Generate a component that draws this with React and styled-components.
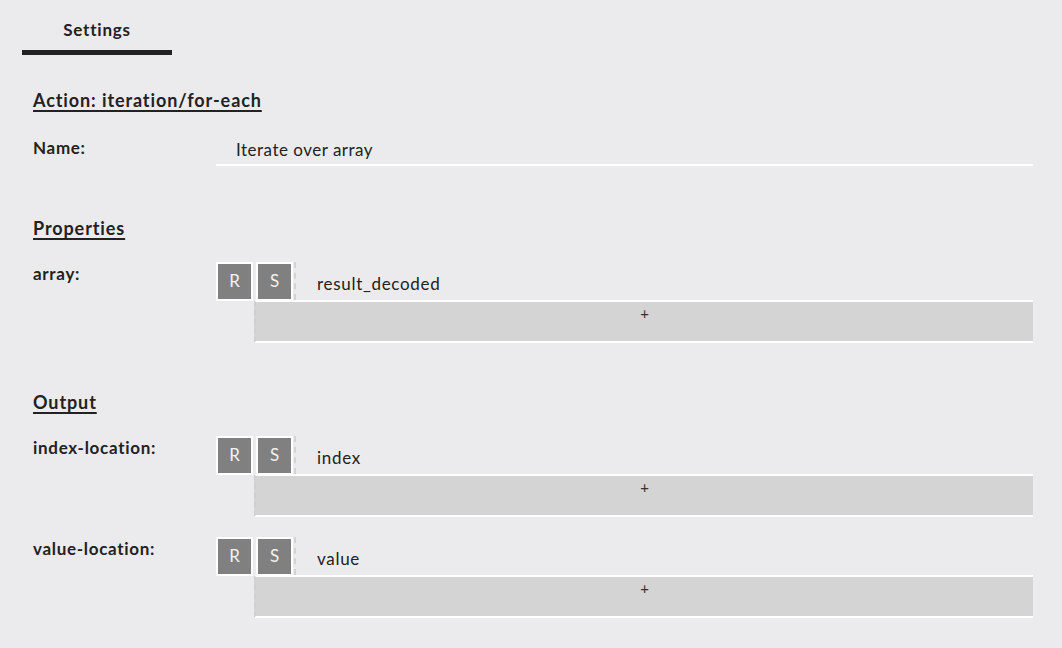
import React from "react";
import styled, { createGlobalStyle } from "styled-components";

const Global = createGlobalStyle`
  html, body { margin: 0; padding: 0; background: #ebebed; }
  body { font-family: Lato, "Open Sans", sans-serif; color: #222; }
  * { box-sizing: border-box; }
`;

const Page = styled.div`
  width: 1062px;
  min-height: 648px;
  padding: 0 29px 0 22px;
`;

const TabBar = styled.div`
  display: flex;
`;

const Tab = styled.div`
  width: 150px;
  height: 55px;
  padding-top: 20px;
  line-height: 20px;
  font-size: 17px;
  font-weight: 700;
  letter-spacing: 0.8px;
  text-align: center;
  border-bottom: 5px solid #222;
`;

const Content = styled.div`
  padding-left: 11px;
  display: flex;
  flex-direction: column;
`;

const Heading = styled.div`
  margin-top: ${(p) => p.$top}px;
  font-size: 18px;
  font-weight: 700;
  letter-spacing: 0.9px;
  line-height: 24px;
  text-decoration: underline;
  text-underline-offset: 3px;
  text-decoration-thickness: 2px;
`;

const Row = styled.div`
  display: flex;
  align-items: flex-start;
  margin-top: ${(p) => p.$top}px;
`;

const Label = styled.div`
  width: 183px;
  flex: none;
  padding-top: 2px;
  font-size: 17px;
  font-weight: 700;
  letter-spacing: 0.7px;
  line-height: 20px;
`;

const TextInput = styled.div`
  flex: 1;
  height: 30px;
  padding-left: 20px;
  line-height: 28px;
  font-size: 17px;
  letter-spacing: 0.5px;
  border-bottom: 2px solid #fff;
`;

const Field = styled.div`
  flex: 1;
  display: flex;
  align-items: flex-start;
`;

const ModeButton = styled.div`
  width: 37px;
  height: 39px;
  flex: none;
  border: 2px solid #fff;
  background: #808080;
  color: #f2f2f2;
  font-size: 17px;
  line-height: 33px;
  text-align: center;
`;

const Stack = styled.div`
  flex: 1;
  margin-left: 1px;
  display: flex;
  flex-direction: column;
`;

const TopRow = styled.div`
  display: flex;
  align-items: flex-start;
  height: 38px;
  padding-left: 2px;
`;

const Divider = styled.div`
  width: 2px;
  height: 38px;
  margin-left: 1px;
  border-left: 2px dashed #d3d3d3;
`;

const Value = styled.div`
  padding-left: 21px;
  padding-top: 5px;
  font-size: 17px;
  letter-spacing: 0.7px;
  line-height: 33px;
`;

const AddBox = styled.div`
  height: 43px;
  background: #d4d4d4;
  border-top: 2px solid #fff;
  border-bottom: 2px solid #fff;
  border-left: 2px dashed #d0d0d0;
  text-align: center;
  font-size: 15px;
  line-height: 23px;
  color: #333;
`;

function VarField({ value }) {
  return (
    <Field>
      <ModeButton>R</ModeButton>
      <Stack>
        <TopRow>
          <ModeButton>S</ModeButton>
          <Divider />
          <Value>{value}</Value>
        </TopRow>
        <AddBox>+</AddBox>
      </Stack>
    </Field>
  );
}

export default function App() {
  return (
    <>
      <Global />
      <Page>
        <TabBar>
          <Tab>Settings</Tab>
        </TabBar>
        <Content>
          <Heading $top={33}>Action: iteration/for-each</Heading>
          <Row $top={24}>
            <Label>Name:</Label>
            <TextInput>Iterate over array</TextInput>
          </Row>
          <Heading $top={50}>Properties</Heading>
          <Row $top={22}>
            <Label>array:</Label>
            <VarField value="result_decoded" />
          </Row>
          <Heading $top={47}>Output</Heading>
          <Row $top={22}>
            <Label>index-location:</Label>
            <VarField value="index" />
          </Row>
          <Row $top={20}>
            <Label>value-location:</Label>
            <VarField value="value" />
          </Row>
        </Content>
      </Page>
    </>
  );
}
